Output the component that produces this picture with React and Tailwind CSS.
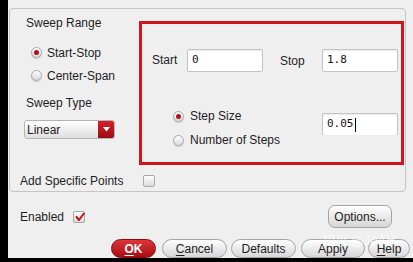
import React from "react";

const font = { fontFamily: '"Liberation Sans", Arial, sans-serif' };

function Radio({ checked }) {
  return (
    <span className="relative inline-flex h-[11px] w-[11px] shrink-0 items-center justify-center rounded-full border border-[#a8a8a8] bg-gradient-to-b from-[#ffffff] to-[#d8d8d8] shadow-[0_1px_1px_rgba(0,0,0,0.15)]">
      {checked && <span className="h-[5px] w-[5px] rounded-full bg-[#b0101a]" />}
    </span>
  );
}

function Check({ checked }) {
  return (
    <span className="relative inline-flex h-[12px] w-[12px] shrink-0 items-center justify-center rounded-[2px] border border-[#a8a8a8] bg-gradient-to-b from-[#ffffff] to-[#dcdcdc]">
      {checked && (
        <svg width="10" height="10" viewBox="0 0 10 10" className="absolute left-[1px] top-[0px]">
          <path d="M1.5 5 L4 8 L8.8 1.5" fill="none" stroke="#c4101a" strokeWidth="2" strokeLinecap="round" strokeLinejoin="round" />
        </svg>
      )}
    </span>
  );
}

function Input({ value, caret }) {
  return (
    <div className="flex h-[23px] w-[76px] items-center rounded-[2px] border border-[#c4c4c4] bg-white pl-[4px] text-[11px] text-[#111] shadow-[inset_0_1px_1px_rgba(0,0,0,0.08)]" style={{ fontFamily: '"DejaVu Sans Mono", "Liberation Mono", monospace' }}>
      {value}
      {caret && <span className="ml-[1px] inline-block h-[14px] w-[1px] bg-black" />}
    </div>
  );
}

function Btn({ children, w, red }) {
  return (
    <div
      className={
        "flex h-[19px] items-center justify-center rounded-full border text-[12px] " +
        (red
          ? "border-[#8a0a10] bg-gradient-to-b from-[#e0343a] to-[#a60c12] font-bold text-white"
          : "border-[#a4a4a4] bg-gradient-to-b from-[#ffffff] to-[#d6d6d6] text-[#222]")
      }
      style={{ width: w }}
    >
      {children}
    </div>
  );
}

export default function App() {
  return (
    <div className="flex h-[262px] w-[413px] bg-black" style={font}>
      <div className="relative ml-[8px] flex h-[258px] w-[405px] flex-col overflow-hidden bg-[#efefef] text-[12px] text-[#1e1e1e]">
        {/* group box */}
        <div className="ml-[1px] mt-[8px] flex h-[186px] w-[397px] flex-col rounded-[4px] border border-[#c6c6c6]">
          <div className="flex">
            <div className="flex w-[129px] flex-col">
              <div className="mt-[6px] h-[16px] pl-[16px] leading-[16px]">Sweep Range</div>
              <div className="mt-[10px] flex h-[23px] items-center gap-[5px] pl-[21px]">
                <Radio checked />
                <span>Start-Stop</span>
              </div>
              <div className="flex h-[23px] items-center gap-[5px] pl-[21px]">
                <Radio />
                <span>Center-Span</span>
              </div>
              <div className="mt-[8px] h-[16px] pl-[16px] leading-[16px]">Sweep Type</div>
              <div className="ml-[14px] mt-[9px] flex h-[19px] w-[91px] overflow-hidden rounded-[3px] border border-[#b4b4b4]">
                <div className="flex flex-1 items-center bg-gradient-to-b from-[#ffffff] to-[#dedede] pl-[2px]">Linear</div>
                <div className="flex w-[16px] items-center justify-center bg-gradient-to-b from-[#d42028] to-[#9c0c12]">
                  <svg width="7" height="5" viewBox="0 0 7 5">
                    <path d="M0 0 L7 0 L3.5 4.5 Z" fill="white" />
                  </svg>
                </div>
              </div>
            </div>
            <div className="mt-[12px] flex h-[144px] w-[265px] flex-col border-[3px] border-[#d2141c]">
              <div className="mt-[25px] flex h-[23px] items-center pl-[10px]">
                <span className="-mt-[2px] w-[35px]">Start</span>
                <Input value="0" />
                <span className="ml-[17px] w-[42px]">Stop</span>
                <Input value="1.8" />
              </div>
              <div className="mt-[32px] flex pl-[31px]">
                <div className="flex w-[149px] flex-col">
                  <div className="flex h-[24px] items-center gap-[6px]">
                    <Radio checked />
                    <span>Step Size</span>
                  </div>
                  <div className="flex h-[24px] items-center gap-[6px]">
                    <Radio />
                    <span>Number of Steps</span>
                  </div>
                </div>
                <div className="mt-[9px]">
                  <div className="h-[22px] overflow-hidden">
                    <Input value="0.05" caret />
                  </div>
                </div>
              </div>
            </div>
          </div>
          <div className="mt-[8px] flex h-[16px] items-center pl-[10px]">
            <span className="w-[123px]">Add Specific Points</span>
            <Check />
          </div>
        </div>

        {/* Enabled / Options */}
        <div className="mt-[13px] flex h-[23px] items-center justify-between pl-[12px] pr-[21px]">
          <div className="flex items-center pt-[1px]">
            <span className="w-[53px]">Enabled</span>
            <Check checked />
          </div>
          <div className="flex h-[23px] w-[64px] items-center justify-center rounded-[7px] border border-[#a4a4a4] bg-gradient-to-b from-[#ffffff] to-[#d6d6d6] text-[12px]">
            Options...
          </div>
        </div>

        {/* bottom buttons */}
        <div className="mt-[11px] flex items-center gap-[4px] pl-[103px]">
          <Btn w="45px" red>
            <span className="underline underline-offset-2">O</span>K
          </Btn>
          <div className="ml-[2px]">
            <Btn w="65px">
              <span className="underline underline-offset-2">C</span>ancel
            </Btn>
          </div>
          <Btn w="65px">Defaults</Btn>
          <div className="ml-[1px]">
            <Btn w="64px">Apply</Btn>
          </div>
          <div className="-ml-[1px] shrink-0">
            <Btn w="42px">
              <span className="underline underline-offset-2">H</span>elp
            </Btn>
          </div>
        </div>

        {/* watermark overlay */}
        <div className="pointer-events-none absolute left-[314px] top-[233px] text-[13px] leading-none text-white/60" style={{ fontFamily: '"Noto Sans CJK SC", "DejaVu Sans", sans-serif' }}>
          知乎 @JoAH
        </div>
      </div>
    </div>
  );
}
